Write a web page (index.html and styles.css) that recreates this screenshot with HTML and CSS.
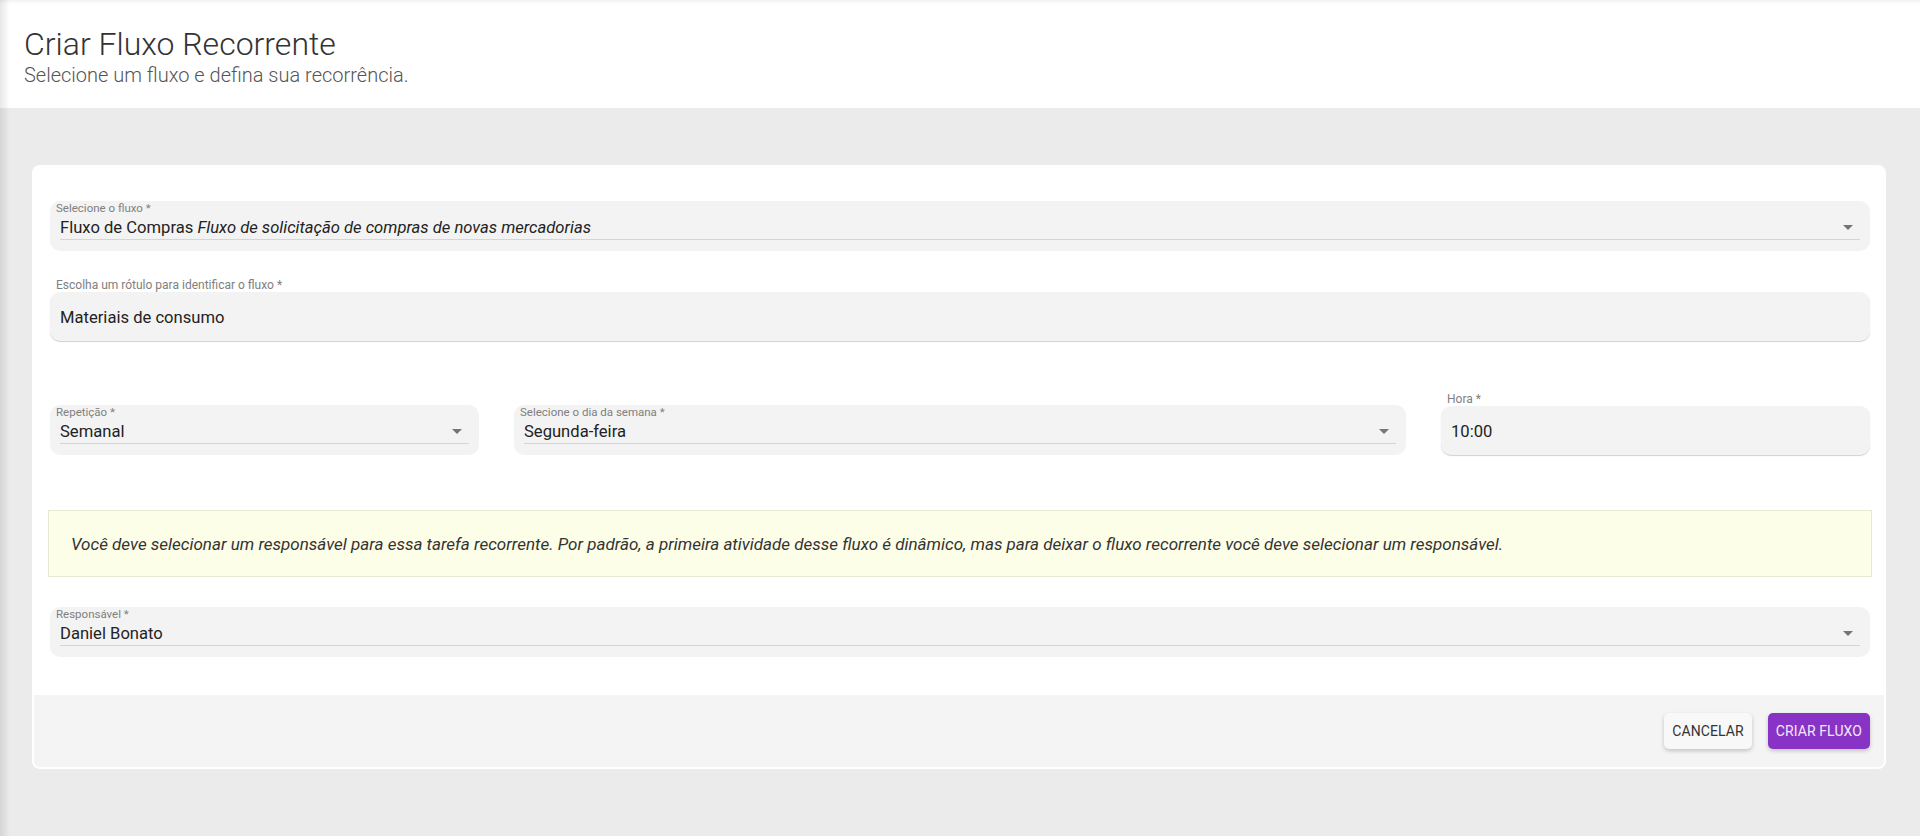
FILE: index.html
```html
<!DOCTYPE html>
<html lang="pt-BR">

<head>
    <meta charset="UTF-8" />
    <title>Criar Fluxo Recorrente</title>
    <link rel="stylesheet" href="styles.css">
</head>

<body>
    <div class="app">
        <!-- cabeçalho -->
        <header class="page-header">
            <h1 class="page-title">Criar Fluxo Recorrente</h1>
            <p class="page-subtitle">Selecione um fluxo e defina sua recorrência.</p>
        </header>

        <main class="content">
            <div class="card">
                <div class="card-body">
                    <!-- fluxo -->
                    <div class="select-field">
                        <label class="inner-label">Selecione o fluxo *</label>
                        <div class="select-value">
                            <span>Fluxo de Compras <em>Fluxo de solicitação de compras de novas mercadorias</em></span>
                            <svg class="arrow" viewBox="0 0 24 24"><path d="M7 10l5 5 5-5z" /></svg>
                        </div>
                    </div>

                    <!-- rótulo -->
                    <div class="text-block row-label">
                        <label class="outer-label">Escolha um rótulo para identificar o fluxo *</label>
                        <div class="text-field">Materiais de consumo</div>
                    </div>

                    <!-- recorrência -->
                    <div class="row-three">
                        <div class="select-field">
                            <label class="inner-label">Repetição *</label>
                            <div class="select-value">
                                <span>Semanal</span>
                                <svg class="arrow" viewBox="0 0 24 24"><path d="M7 10l5 5 5-5z" /></svg>
                            </div>
                        </div>
                        <div class="select-field">
                            <label class="inner-label">Selecione o dia da semana *</label>
                            <div class="select-value">
                                <span>Segunda-feira</span>
                                <svg class="arrow" viewBox="0 0 24 24"><path d="M7 10l5 5 5-5z" /></svg>
                            </div>
                        </div>
                        <div class="text-block">
                            <label class="outer-label">Hora *</label>
                            <div class="text-field">10:00</div>
                        </div>
                    </div>

                    <div class="alert">
                        Você deve selecionar um responsável para essa tarefa recorrente. Por padrão, a primeira atividade desse fluxo é dinâmico, mas para deixar o fluxo recorrente você deve selecionar um responsável.
                    </div>

                    <!-- responsável -->
                    <div class="select-field">
                        <label class="inner-label">Responsável *</label>
                        <div class="select-value">
                            <span>Daniel Bonato</span>
                            <svg class="arrow" viewBox="0 0 24 24"><path d="M7 10l5 5 5-5z" /></svg>
                        </div>
                    </div>
                </div>

                <div class="card-footer">
                    <button class="btn btn-cancel">Cancelar</button>
                    <button class="btn btn-primary">Criar fluxo</button>
                </div>
            </div>
        </main>
    </div>
</body>

</html>
```

FILE: styles.css
```css
* {
    margin: 0;
    padding: 0;
    box-sizing: border-box;
}

body {
    background-color: #ebebeb;
    font-family: Roboto, "Liberation Sans", sans-serif;
    color: #222;
}

.app {
    min-height: 836px;
}

/* sombra do menu lateral */
.app::before {
    content: "";
    position: fixed;
    left: 0;
    top: 0;
    bottom: 0;
    width: 10px;
    background: linear-gradient(to right, rgba(0, 0, 0, 0.09), rgba(0, 0, 0, 0));
    pointer-events: none;
}

.page-header {
    height: 108px;
    padding: 26px 24px 0;
    background-color: #fff;
    box-shadow: inset 0 4px 4px -3px rgba(0, 0, 0, 0.08);
}

.page-title {
    font-size: 32px;
    font-weight: 300;
    line-height: 37px;
    color: #333;
}

.page-subtitle {
    font-size: 20px;
    font-weight: 300;
    line-height: 24px;
    color: #555;
}

.content {
    padding: 57px 34px 0 32px;
}

.card {
    background-color: #fff;
    border: 2px solid #fff;
    border-radius: 8px;
}

.card-body {
    padding: 34px 14px 38px 16px;
}

/* select com rótulo interno */
.select-field {
    height: 50px;
    padding: 0 10px;
    background-color: #f3f3f3;
    border-radius: 10px;
}

.inner-label {
    display: block;
    margin-left: -4px;
    font-size: 11.5px;
    line-height: 14px;
    color: #808080;
}

.select-value {
    display: flex;
    align-items: center;
    justify-content: space-between;
    height: 25px;
    border-bottom: 1px solid #d5d5d5;
    font-size: 16.6px;
    color: #222;
}

.select-value em {
    font-style: italic;
}

.arrow {
    width: 24px;
    height: 24px;
    fill: #757575;
}

/* campo de texto com rótulo externo */
.row-label {
    margin-top: 27px;
}

.outer-label {
    display: block;
    padding-left: 6px;
    font-size: 12px;
    line-height: 14px;
    color: #808080;
}

.text-field {
    display: flex;
    align-items: center;
    height: 49px;
    padding: 2px 10px 0;
    background-color: #f3f3f3;
    border-radius: 10px;
    box-shadow: 0 1px 1px rgba(0, 0, 0, 0.18);
    font-size: 16.6px;
    color: #222;
}

.row-three {
    display: grid;
    grid-template-columns: 429fr 892fr 429fr;
    gap: 35px;
    align-items: end;
    margin-top: 51px;
}

.alert {
    display: flex;
    align-items: center;
    height: 67px;
    margin: 55px -2px 0;
    padding: 0 22px;
    background-color: #fdfee8;
    border: 1px solid #e7ead0;
    font-size: 17px;
    font-style: italic;
    color: #333;
}

.alert + .select-field {
    margin-top: 30px;
}

.card-footer {
    display: flex;
    justify-content: flex-end;
    gap: 16px;
    padding: 18px 14px 18px 0;
    background-color: #f4f4f4;
    border-radius: 0 0 6px 6px;
}

.btn {
    height: 36px;
    padding: 0 8px;
    border: none;
    border-radius: 5px;
    font-family: Roboto, "Liberation Sans", sans-serif;
    font-size: 14px;
    font-weight: 400;
    letter-spacing: 0.1px;
    text-transform: uppercase;
    cursor: pointer;
}

.btn-cancel {
    background-color: #f8f8f8;
    color: #333;
    box-shadow: 0 2px 4px rgba(0, 0, 0, 0.2);
}

.btn-primary {
    background-color: #8833c6;
    color: #f2e8f8;
    box-shadow: 0 2px 4px rgba(0, 0, 0, 0.2);
}
```
